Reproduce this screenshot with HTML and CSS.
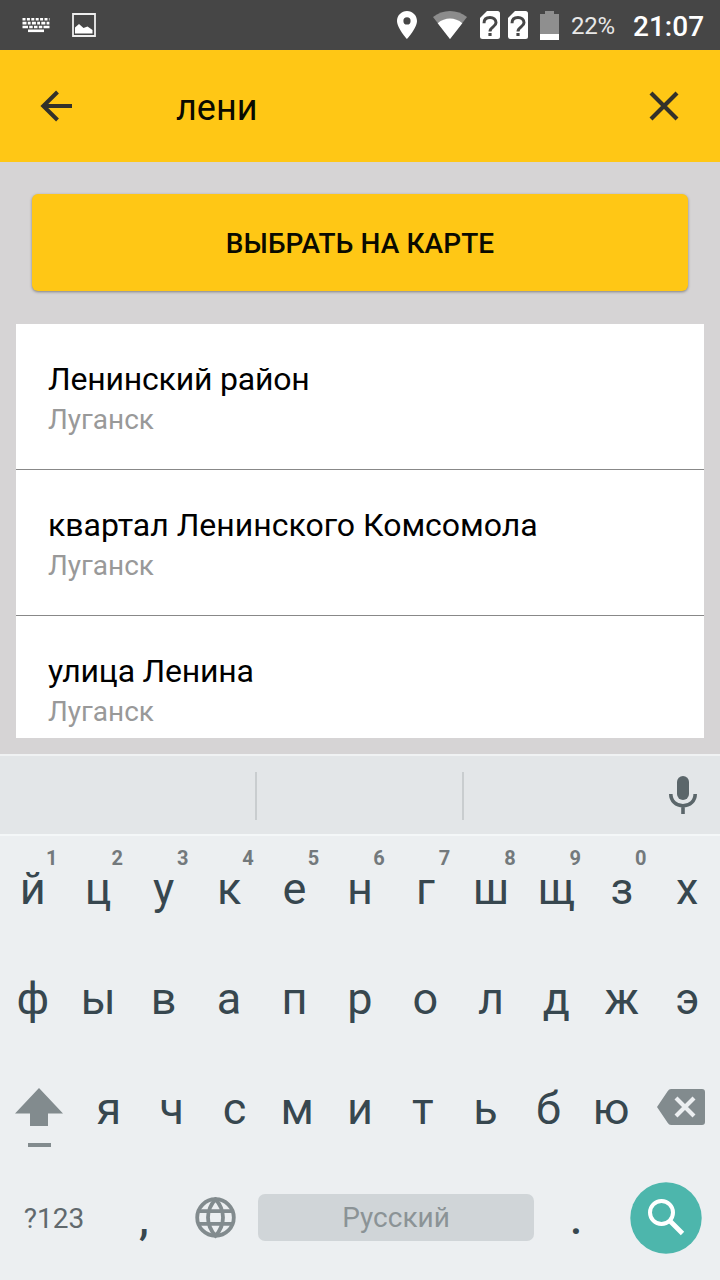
FILE: index.html
```html
<!DOCTYPE html>
<html lang="ru">
<head>
<meta charset="utf-8">
<title>Поиск адреса</title>
<link rel="stylesheet" href="styles.css">
</head>
<body>
<div class="screen">
  <div class="status">
    <svg class="status-kbd" width="30" height="18" viewBox="0 0 30 18">
      <g fill="none" stroke="#fff" stroke-width="2.6">
        <path d="M1.500 3.300h27" stroke-dasharray="3 1.400"/>
        <path d="M1.500 7.100h27" stroke-dasharray="4 1.300 2.800 1.300"/>
        <path d="M1.500 11h5.500m1.200 0h3.500m1.300 0h3.500m1.300 0h3.500m1.200 0h6"/>
      </g>
      <path d="M7 13.500h16v2.600H7z" fill="#fff"/>
    </svg>
    <svg width="24" height="24" viewBox="0 0 24 24">
      <path d="M1 1h22v22H1z" fill="none" stroke="#eee" stroke-width="1.800"/>
      <path d="M3 20.500v-6l4-3.500 4.500 4 4-1.500 5 3.500v3.500z" fill="#fff"/>
    </svg>
    <div class="status-right">
      <svg class="ic-pin" width="20" height="28" viewBox="0 0 20 28"><path fill="#fff" fill-rule="evenodd" d="M10 0C4.500 0 0 4.400 0 9.900 0 17 10 28 10 28s10-11 10-18.100C20 4.400 15.500 0 10 0zm0 6.300a3.600 3.600 0 1 1 0 7.200 3.600 3.600 0 0 1 0-7.200z"/></svg>
      <svg class="ic-wifi" width="34" height="28" viewBox="0 0 34 28"><path fill="#8c8c8c" d="M17 28 0 6C9.500-2 24.500-2 34 6z"/><path fill="#fff" d="M17 28 4.700 12.200C12 6 22 6 29.300 12.200z"/></svg>
      <svg class="ic-sim" width="20" height="28" viewBox="0 0 20 28"><path fill="#fff" d="M7 0h10.500A2.500 2.500 0 0 1 20 2.500v23a2.500 2.500 0 0 1-2.500 2.500h-15A2.500 2.500 0 0 1 0 25.500V7z"/><path d="M4 12.200c0-4 2.600-5.700 6-5.700s6 1.900 6 5.300c0 4-6 4.200-6 8.700" fill="none" stroke="#464646" stroke-width="3"/><path fill="#464646" d="M8.400 22h3.200v3H8.400z"/></svg>
      <svg class="ic-sim2" width="20" height="28" viewBox="0 0 20 28"><path fill="#fff" d="M7 0h10.500A2.500 2.500 0 0 1 20 2.500v23a2.500 2.500 0 0 1-2.500 2.500h-15A2.500 2.500 0 0 1 0 25.500V7z"/><path d="M4 12.200c0-4 2.600-5.700 6-5.700s6 1.900 6 5.300c0 4-6 4.200-6 8.700" fill="none" stroke="#464646" stroke-width="3"/><path fill="#464646" d="M8.400 22h3.200v3H8.400z"/></svg>
      <svg class="ic-bat" width="19" height="29" viewBox="0 0 19 29"><path fill="#8f8f8f" d="M0 3h5V0h9v3h5v20H0z"/><path fill="#fff" d="M0 23h19v6H0z"/></svg>
      <span class="percent">22%</span>
      <span class="clock">21:07</span>
    </div>
  </div>

  <div class="appbar">
    <svg width="34" height="32" viewBox="0 0 34 32"><path d="M18.500 2 4.300 16l14.200 14M4.300 16H33" fill="none" stroke="#33312a" stroke-width="4"/></svg>
    <span class="query">лени</span>
    <svg class="clear" width="30" height="30" viewBox="0 0 30 30"><path d="m2 2 26 26M28 2 2 28" fill="none" stroke="#33312a" stroke-width="4.200"/></svg>
  </div>

  <div class="content">
    <div class="map-button">ВЫБРАТЬ НА КАРТЕ</div>
    <div class="results">
      <div class="item"><div class="title tight">Ленинский район</div><div class="city">Луганск</div></div>
      <div class="item"><div class="title">квартал Ленинского Комсомола</div><div class="city">Луганск</div></div>
      <div class="item"><div class="title tight">улица Ленина</div><div class="city">Луганск</div></div>
    </div>
  </div>

  <div class="suggest">
    <div class="slot slot-first"></div>
    <div class="slot slot-mid"></div>
    <svg class="mic" width="30" height="40" viewBox="0 0 30 40"><rect x="9" y="1" width="12" height="24" rx="6" fill="#5b666a"/><path d="M2.800 19c0 7 5.300 11.800 12.200 11.800S27.200 26 27.200 19M15 31v8" fill="none" stroke="#5b666a" stroke-width="3.600"/></svg>
  </div>

  <div class="keyboard">
    <div class="row row-top">
      <div class="key">й<span class="hint">1</span></div><div class="key">ц<span class="hint">2</span></div><div class="key">у<span class="hint">3</span></div><div class="key">к<span class="hint">4</span></div><div class="key">е<span class="hint">5</span></div><div class="key">н<span class="hint">6</span></div><div class="key">г<span class="hint">7</span></div><div class="key">ш<span class="hint">8</span></div><div class="key">щ<span class="hint">9</span></div><div class="key">з<span class="hint">0</span></div><div class="key">х</div>
    </div>
    <div class="row">
      <div class="key">ф</div><div class="key">ы</div><div class="key">в</div><div class="key">а</div><div class="key">п</div><div class="key">р</div><div class="key">о</div><div class="key">л</div><div class="key">д</div><div class="key">ж</div><div class="key">э</div>
    </div>
    <div class="row">
      <div class="side"><svg class="shift" width="48" height="60" viewBox="0 0 48 60"><path fill="#828b8e" d="M24 0 48 25.500H33V38H15V25.500H0zM13 55h23v4H13z"/></svg></div>
      <div class="key">я</div><div class="key">ч</div><div class="key">с</div><div class="key">м</div><div class="key">и</div><div class="key">т</div><div class="key">ь</div><div class="key">б</div><div class="key">ю</div>
      <div class="side side-right"><svg class="back" width="48" height="36" viewBox="0 0 48 36"><path fill="#828b8e" d="M14 0h31a3 3 0 0 1 3 3v30a3 3 0 0 1-3 3H14q-2 0-3.200-2L0 18 10.800 2Q12 0 14 0z"/><path d="m19 9 18 18m0-18L19 27" fill="none" stroke="#eceff1" stroke-width="4.200"/></svg></div>
    </div>
    <div class="row row-bottom">
      <div class="mode">?123</div>
      <div class="punct">,</div>
      <div class="globe"><svg width="42" height="42" viewBox="0 0 42 42"><g fill="none" stroke="#828b8e" stroke-width="3.800"><circle cx="21.500" cy="20.500" r="18.300"/><path d="M21.500 2.200c-10 11-10 25.600 0 36.600 10-11 10-25.600 0-36.600zM4.500 14.200h34M4.500 26.800h34"/></g></svg></div>
      <div class="space">Русский</div>
      <div class="punct">.</div>
      <div class="enter"><svg width="72" height="72" viewBox="0 0 72 72"><circle cx="36" cy="36" r="35.700" fill="#4db6ac"/><circle cx="31.500" cy="30.500" r="11.500" fill="none" stroke="#fff" stroke-width="4"/><path d="m40 39 12.500 12.500" stroke="#fff" stroke-width="4.800"/></svg></div>
    </div>
  </div>
</div>
</body>
</html>
```
FILE: styles.css
```css
* { box-sizing: border-box; }
body { margin: 0; font-family: Roboto, "Noto Sans", sans-serif; }
svg { display: block; flex: none; }

.screen {
  width: 720px;
  height: 1280px;
  display: flex;
  flex-direction: column;
  overflow: hidden;
  background: #d6d4d5;
}

/* System status bar */
.status {
  height: 50px;
  flex: none;
  display: flex;
  align-items: center;
  padding: 0 16px 0 21px;
  background: #464646;
  color: #fff;
}
.status-kbd { margin-right: 21px; }
.status-right { margin-left: auto; display: flex; align-items: center; }
.ic-wifi { margin-left: 16px; }
.ic-sim { margin-left: 13px; }
.ic-sim2 { margin-left: 8px; }
.ic-bat { margin-left: 12px; }
.percent { width: 43px; margin: 2px 0 0 12px; font-size: 24px; line-height: 30px; letter-spacing: -.3px; color: #e8e8e8; }
.clock { width: 71px; margin: 3px 0 0 19px; font-size: 28px; line-height: 34px; font-weight: 500; }

/* Search bar */
.appbar {
  height: 112px;
  flex: none;
  display: flex;
  align-items: center;
  padding: 0 41px 0 39px;
  background: #ffc715;
}
.query { margin: 3px 0 0 103px; font-size: 36px; line-height: 44px; color: #0a0a00; }
.clear { margin-left: auto; }

.content {
  height: 592px;
  flex: none;
  padding: 32px 16px 16px;
  display: flex;
  flex-direction: column;
  gap: 33px;
}
.map-button {
  height: 97px;
  flex: none;
  margin: 0 16px;
  display: flex;
  align-items: center;
  justify-content: center;
  padding-top: 1px;
  border-radius: 6px;
  background: #ffc715;
  box-shadow: 0 1px 3px rgba(0, 0, 0, .4);
  font-size: 28px;
  font-weight: 500;
  letter-spacing: .1px;
  color: #0a0a00;
}
.results { flex: 1; min-height: 0; overflow: hidden; background: #fff; }
.item { height: 146px; padding: 36px 32px 0; border-bottom: 1px solid #888; }
.title { font-size: 32px; line-height: 38px; color: #000; }
.tight { letter-spacing: -.2px; }
.city { margin-top: 5px; font-size: 28px; line-height: 34px; color: #999; }

/* Suggestion strip */
.suggest {
  height: 82px;
  flex: none;
  display: flex;
  align-items: center;
  border-top: 2px solid #f0f2f3;
  border-bottom: 2px solid #f4f7f8;
  background: #e3e6e8;
}
.slot { height: 48px; margin-top: 2px; border-right: 2px solid #c9cdcf; }
.slot-first { width: 257px; }
.slot-mid { width: 207px; }
.mic { margin: 0 22px 0 auto; }

.keyboard { flex: 1; background: #eceff1; color: #37474f; }
.row { height: 110px; display: flex; align-items: center; }
.row-top { height: 108px; padding-bottom: 2px; }
.key {
  flex: 1;
  height: 108px;
  position: relative;
  display: flex;
  align-items: center;
  justify-content: center;
  font-size: 45px;
  line-height: 40px;
}
.hint {
  position: absolute;
  top: 13px;
  right: 8px;
  font-size: 20px;
  line-height: 20px;
  font-weight: 700;
  color: #73797c;
}
.side { width: 77.500px; display: flex; padding-left: 15px; }
.side-right { padding-left: 14.500px; }
.shift { margin-top: 18px; }
.back { margin-bottom: 4px; }

.row-bottom { height: 107px; }
.mode { width: 108px; padding-top: 1px; text-align: center; font-size: 28px; color: #61696d; }
.punct { width: 72px; padding-top: 3px; text-align: center; font-size: 44px; font-weight: 500; color: #37474f; }
.globe { width: 78px; padding-left: 14px; }
.space {
  width: 276px;
  height: 47px;
  border-radius: 7px;
  background: #d0d5d8;
  text-align: center;
  font-size: 28px;
  line-height: 47px;
  color: #8b9396;
}
.row-bottom .space + .punct { margin-left: 6px; }
.enter { margin-left: 18px; }
```
